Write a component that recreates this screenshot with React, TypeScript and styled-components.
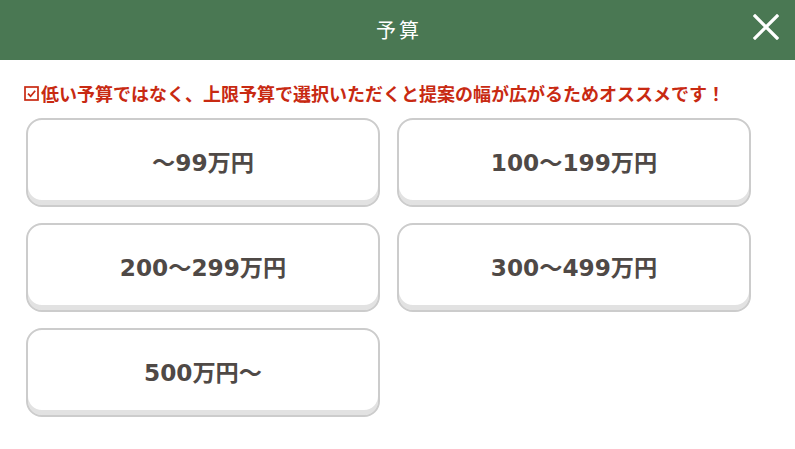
import React from "react";
import styled, { createGlobalStyle } from "styled-components";

const GlobalStyle = createGlobalStyle`
  html, body { margin: 0; padding: 0; background: #ffffff; }
  body { font-family: "Noto Sans CJK JP", "Noto Sans", sans-serif; }
  * { box-sizing: border-box; }
`;

const Page = styled.div`
  width: 795px;
  height: 449px;
  background: #ffffff;
  display: flex;
  flex-direction: column;
`;

const Header = styled.header`
  position: relative;
  height: 60px;
  background: #4a7853;
  display: flex;
  align-items: center;
  justify-content: center;
`;

const Title = styled.h1`
  margin: 0;
  color: #ffffff;
  font-family: "Noto Sans CJK JP", sans-serif;
  font-weight: 400;
  font-size: 20px;
  line-height: 1;
  letter-spacing: 3px;
  padding-left: 3px;
`;

const CloseButton = styled.button`
  position: absolute;
  right: 14px;
  top: 12px;
  width: 30px;
  height: 30px;
  padding: 0;
  border: none;
  background: transparent;
  display: flex;
  align-items: center;
  justify-content: center;
  cursor: pointer;
`;

const Body = styled.div`
  padding: 22px 0 0 24px;
  display: flex;
  flex-direction: column;
  gap: 14px;
`;

const Notice = styled.p`
  margin: 0;
  display: flex;
  align-items: center;
  gap: 1px;
  height: 22px;
  color: #c82a12;
  font-family: "Noto Sans CJK JP", sans-serif;
  font-weight: 700;
  font-size: 18px;
  line-height: 22px;
  white-space: nowrap;
`;

const Grid = styled.div`
  display: grid;
  grid-template-columns: 354px 354px;
  grid-auto-rows: 89px;
  column-gap: 17px;
  row-gap: 16px;
  padding-left: 2px;
`;

const Choice = styled.button`
  border: 2px solid #cccccc;
  border-radius: 16px;
  background: #ffffff;
  box-shadow: inset 0 -5px 0 #e2e2e2;
  padding: 0 0 4px 0;
  display: flex;
  align-items: center;
  justify-content: center;
  color: #4f4946;
  font-family: "DejaVu Sans", "Noto Sans CJK JP", sans-serif;
  font-weight: 700;
  font-size: 23.2px;
  cursor: pointer;
`;

const options = [
  "～99万円",
  "100～199万円",
  "200～299万円",
  "300～499万円",
  "500万円～",
];

const CheckIcon = () => (
  <svg width="15" height="15" viewBox="0 0 15 15" style={{ marginRight: 1 }}>
    <rect x="1" y="1" width="13" height="13" fill="none" stroke="#c82a12" strokeWidth="1.7" />
    <path d="M4 7.6 L6.6 10.2 L11.2 4.8" fill="none" stroke="#c82a12" strokeWidth="1.7" />
  </svg>
);

const CloseIcon = () => (
  <svg width="26" height="26" viewBox="0 0 26 26">
    <path d="M2 2 L24 24 M24 2 L2 24" stroke="#ffffff" strokeWidth="3.2" strokeLinecap="square" />
  </svg>
);

export default function App() {
  return (
    <>
      <GlobalStyle />
      <Page>
        <Header>
          <Title>予算</Title>
          <CloseButton aria-label="閉じる">
            <CloseIcon />
          </CloseButton>
        </Header>
        <Body>
          <Notice>
            <CheckIcon />
            低い予算ではなく、上限予算で選択いただくと提案の幅が広がるためオススメです！
          </Notice>
          <Grid>
            {options.map((o) => (
              <Choice key={o}>{o}</Choice>
            ))}
          </Grid>
        </Body>
      </Page>
    </>
  );
}
